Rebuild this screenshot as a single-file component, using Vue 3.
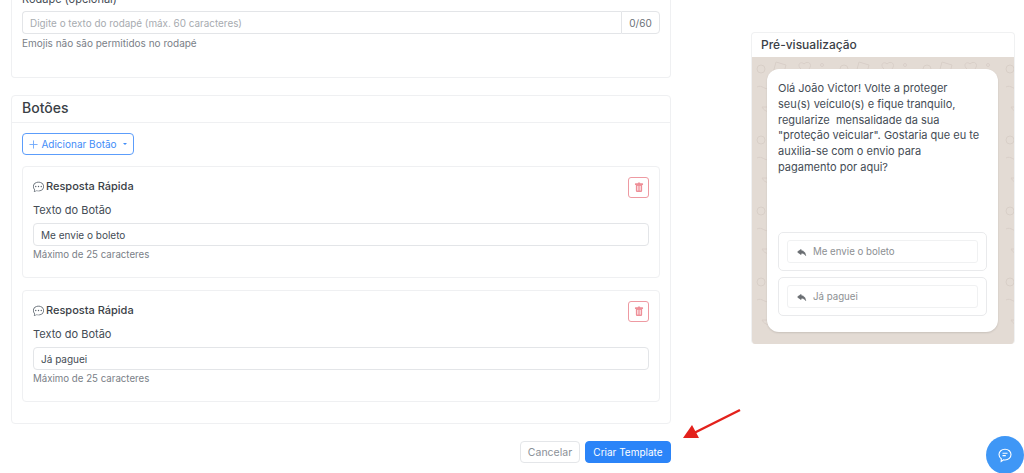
<script setup>
const replies = [
  { id: 1, value: 'Me envie o boleto' },
  { id: 2, value: 'Já paguei' },
]
const message = [
  'Olá João Victor! Volte a proteger',
  'seu(s) veículo(s) e fique tranquilo,',
  'regularize  mensalidade da sua',
  '"proteção veicular". Gostaria que eu te',
  'auxilia-se com o envio para',
  'pagamento por aqui?',
]
</script>

<template>
  <div class="page">
    <main class="left">
      <section class="card first">
        <label class="label">Rodapé (opcional)</label>
        <div class="group">
          <div class="input ph">Digite o texto do rodapé (máx. 60 caracteres)</div>
          <div class="addon">0/60</div>
        </div>
        <p class="hint">Emojis não são permitidos no rodapé</p>
      </section>

      <section class="card second">
        <h2 class="card-head">Botões</h2>
        <div class="card-body">
          <button class="add">
            <svg width="9" height="9" viewBox="0 0 10 10"><path d="M5 .5v9M.5 5h9" stroke="#6ea8fb" stroke-width="1" fill="none" /></svg>
            <span>Adicionar Botão</span>
            <i class="caret"></i>
          </button>
          <article v-for="r in replies" :key="r.id" class="reply">
            <div class="reply-head">
              <h3 class="reply-title">
                <svg width="11" height="11" viewBox="0 0 16 16" fill="#59626b"><path d="M5 8a1 1 0 1 1-2 0 1 1 0 0 1 2 0m4 0a1 1 0 1 1-2 0 1 1 0 0 1 2 0m3 1a1 1 0 1 0 0-2 1 1 0 0 0 0 2"/><path d="m2.165 15.803.02-.004c1.83-.363 2.948-.842 3.468-1.105A9 9 0 0 0 8 15c4.418 0 8-3.134 8-7s-3.582-7-8-7-8 3.134-8 7c0 1.76.743 3.37 1.97 4.6a10.4 10.4 0 0 1-.524 2.318l-.003.011a11 11 0 0 1-.244.637c-.079.186.074.394.273.362a22 22 0 0 0 .693-.125m.8-3.108a1 1 0 0 0-.287-.801C1.618 10.83 1 9.468 1 8c0-3.192 3.004-6 7-6s7 2.808 7 6-3.004 6-7 6a8 8 0 0 1-2.088-.272 1 1 0 0 0-.711.074c-.387.196-1.24.57-2.634.893a11 11 0 0 0 .398-2"/></svg>
                Resposta Rápida
              </h3>
              <button class="trash" aria-label="Excluir">
                <svg width="10" height="11" viewBox="0 0 16 16" fill="#ee8f98"><path d="M2.500 1a1 1 0 0 0-1 1v1a1 1 0 0 0 1 1H3v9a2 2 0 0 0 2 2h6a2 2 0 0 0 2-2V4h.5a1 1 0 0 0 1-1V2a1 1 0 0 0-1-1H10a1 1 0 0 0-1-1H7a1 1 0 0 0-1 1zm3 4a.5.5 0 0 1 .5.5v7a.5.5 0 0 1-1 0v-7a.5.5 0 0 1 .5-.5M8 5a.5.5 0 0 1 .5.5v7a.5.5 0 0 1-1 0v-7A.5.5 0 0 1 8 5m3 .5v7a.5.5 0 0 1-1 0v-7a.5.5 0 0 1 1 0"/></svg>
              </button>
            </div>
            <label class="label field">Texto do Botão</label>
            <div class="input value">{{ r.value }}</div>
            <p class="hint small">Máximo de 25 caracteres</p>
          </article>
        </div>
      </section>

      <footer class="actions">
        <button class="btn cancel">Cancelar</button>
        <button class="btn primary">Criar Template</button>
      </footer>
    </main>

    <aside class="preview">
      <h2 class="preview-head">Pré-visualização</h2>
      <div class="wall">
        <svg class="doodles" width="264" height="287" aria-hidden="true">
          <defs>
            <pattern id="doodle" width="83" height="71" patternUnits="userSpaceOnUse">
              <g fill="none" stroke="#d5ccc4" stroke-width="1">
                <circle cx="9" cy="12" r="4" />
                <path d="M24 5l10 3-3 11-10-3z" />
                <path d="M52 7c4-4 9 0 5 5l-4 4-5-5c-3-4 1-7 4-4z" />
                <circle cx="70" cy="8" r="1.500" />
                <circle cx="76" cy="20" r="2.500" />
                <path d="M5 30c5-3 8 4 13 1" />
                <rect x="34" y="28" width="9" height="13" rx="2" transform="rotate(-14 38 34)" />
                <circle cx="60" cy="36" r="3" />
                <path d="M68 32l7 6-5 5" />
                <path d="M10 50c3 6 10 6 13 0z" />
                <circle cx="38" cy="56" r="1.500" />
                <path d="M48 52l8 4 7-5M60 60c4-3 8-2 11 1" />
              </g>
            </pattern>
          </defs>
          <rect width="264" height="287" fill="url(#doodle)" />
        </svg>
        <div class="bubble">
          <p class="msg"><span v-for="(l, i) in message" :key="i" class="msg-line">{{ l }}</span></p>
          <div class="quick-list">
            <div v-for="r in replies" :key="r.id" class="quick">
              <div class="quick-in">
                <svg width="10" height="10" viewBox="0 0 16 16" fill="#6b6f73" stroke="#6b6f73" stroke-width=".8"><path d="M5.921 11.900 1.353 8.620a.72.72 0 0 1 0-1.238L5.921 4.100A.716.716 0 0 1 7 4.719V6c1.500 0 6 0 7 8-2.500-4.500-7-4-7-4v1.281c0 .56-.606.898-1.079.62z"/></svg>
                <span>{{ r.value }}</span>
              </div>
            </div>
          </div>
        </div>
      </div>
    </aside>

    <svg class="arrow" width="64" height="36" viewBox="0 0 64 36" aria-hidden="true">
      <path d="M60 3 L12 27" stroke="#e3211c" stroke-width="2.4" fill="none" />
      <path d="M3 31 L12 18 L19 31 Z" fill="#e3211c" />
    </svg>

    <button class="fab" aria-label="Chat">
      <svg width="16" height="16" viewBox="0 0 16 16" fill="none" stroke="#fff" stroke-width="1.1"><path d="M8 2.200c3.400 0 6 2.300 6 5.400s-2.600 5.400-6 5.400c-.5 0-1-.1-1.400-.1L4.200 14.500l.1-2.700C2.900 10.800 2 9.300 2 7.600 2 4.500 4.600 2.200 8 2.200z"/><path d="M5.500 6.300h5M5.500 8.600h3.300"/></svg>
    </button>
  </div>
</template>

<style>
html, body { margin: 0; height: 473px; overflow: hidden; background: #fff; }
</style>

<style scoped>
.page {
  box-sizing: border-box;
  height: 493px;
  margin-top: -20px;
  padding: 0 9px 0 11px;
  display: flex;
  align-items: flex-start;
  gap: 80px;
  font-family: Inter, "Noto Sans", sans-serif;
  font-size: 10px;
  color: #444c55;
  overflow: hidden;
}
.left { width: 660px; flex: none; }
.card {
  box-sizing: border-box;
  background: #fff;
  border: 1px solid #eff0f2;
  border-radius: 4px;
}
.first { height: 98px; padding: 11px 10px 0; border-top: 0; }
.label { display: block; font-size: 11px; line-height: 16px; color: #444c55; }
.group { display: flex; margin-top: 4px; height: 23px; }
.input {
  box-sizing: border-box;
  border: 1px solid #e3e5e8;
  border-radius: 4px;
  height: 23px;
  padding: 0 7px;
  display: flex;
  align-items: center;
  font-size: 10px;
}
.group .input { flex: 1; border-radius: 4px 0 0 4px; border-right: 0; font-size: 9.9px; }
.ph { color: #a7abb0; }
.addon {
  box-sizing: border-box;
  width: 39px;
  border: 1px solid #e3e5e8;
  border-radius: 0 4px 4px 0;
  display: flex;
  align-items: center;
  justify-content: center;
  color: #6b7178;
}
.hint { margin: 2px 0 0; line-height: 14px; color: #7a8087; font-size: 10px; }
.second { margin-top: 17px; height: 329px; }
.card-head {
  margin: 0;
  height: 27px;
  box-sizing: border-box;
  padding: 0 10px;
  line-height: 24px;
  font-size: 14px;
  font-weight: 500;
  color: #3a4046;
  border-bottom: 1px solid #eff0f2;
}
.card-body { padding: 10px; }
.add {
  box-sizing: border-box;
  height: 22px;
  width: 112px;
  padding: 0;
  background: #fff;
  border: 1px solid #5c9dfb;
  border-radius: 4px;
  color: #3f8cf8;
  font: inherit;
  font-size: 10px;
  display: flex;
  align-items: center;
  justify-content: center;
  gap: 3px;
}
.caret {
  margin-left: 3px;
  width: 0;
  height: 0;
  border: 2.500px solid transparent;
  border-top-color: currentColor;
  border-bottom: 0;
}
.reply {
  box-sizing: border-box;
  height: 112px;
  margin-top: 11px;
  padding: 10px 10px 0;
  border: 1px solid #eff0f2;
  border-radius: 4px;
}
.reply + .reply { margin-top: 12px; }
.reply-head { display: flex; align-items: flex-start; justify-content: space-between; height: 22px; }
.reply-title {
  margin: 0;
  display: flex;
  align-items: center;
  gap: 2px;
  height: 18px;
  font-size: 11px;
  font-weight: 500;
  color: #3a4046;
}
.trash {
  box-sizing: border-box;
  width: 21px;
  height: 21px;
  padding: 0;
  background: #fff;
  border: 1px solid #ee9aa2;
  border-radius: 3px;
  display: flex;
  align-items: center;
  justify-content: center;
}
.field { margin-top: 3px; }
.value { margin-top: 5px; color: #444c55; }
.small { margin-top: 2px; font-size: 9.7px; }
.actions { display: flex; justify-content: flex-end; gap: 5px; margin-top: 17px; }
.btn {
  box-sizing: border-box;
  height: 22px;
  padding: 0;
  font: inherit;
  font-size: 10px;
  border-radius: 4px;
  border: 1px solid #e4e6e9;
}
.cancel { width: 60px; background: #fff; color: #8a9097; font-size: 10.500px; }
.primary { width: 86px; background: #2b84f8; border-color: #2b84f8; color: #fff; }
.preview {
  box-sizing: border-box;
  width: 264px;
  margin-top: 52px;
  flex: none;
  border-radius: 4px;
  overflow: hidden;
  border: 1px solid #f0f1f2;
  border-bottom: 0;
}
.preview-head {
  margin: 0;
  height: 24px;
  padding: 0 9px;
  line-height: 23px;
  font-size: 12px;
  font-weight: 500;
  color: #3a4046;
}
.wall {
  position: relative;
  height: 287px;
  background: #e3dbd4;
  padding: 12px 16px 0 15px;
  box-sizing: border-box;
}
.doodles { position: absolute; left: 0; top: 0; opacity: .8; }
.bubble {
  position: relative;
  box-sizing: border-box;
  height: 263px;
  background: #fff;
  border-radius: 12px;
  padding: 12px 11px 16px;
  box-shadow: 0 1px 2px rgba(0,0,0,.12);
  display: flex;
  flex-direction: column;
  justify-content: space-between;
}
.msg { margin: 0; font-size: 11px; line-height: 15.8px; color: #444c55; }
.msg-line { display: block; white-space: pre; }
.quick-list { display: flex; flex-direction: column; gap: 6px; }
.quick {
  box-sizing: border-box;
  height: 39px;
  padding: 0 8px;
  border: 1px solid #e9eaec;
  border-radius: 5px;
  display: flex;
  align-items: center;
}
.quick-in {
  box-sizing: border-box;
  flex: 1;
  height: 23px;
  padding: 0 9px;
  border: 1px solid #f0f1f2;
  border-radius: 3px;
  display: flex;
  align-items: center;
  gap: 6px;
  color: #8d9093;
  font-size: 9.700px;
}
.arrow { position: absolute; left: 680px; top: 407px; }
.fab {
  position: absolute;
  left: 986px;
  top: 436px;
  width: 38px;
  height: 38px;
  padding: 0;
  border: 0;
  border-radius: 50%;
  background: #3f97f6;
  display: flex;
  align-items: center;
  justify-content: center;
}
</style>
